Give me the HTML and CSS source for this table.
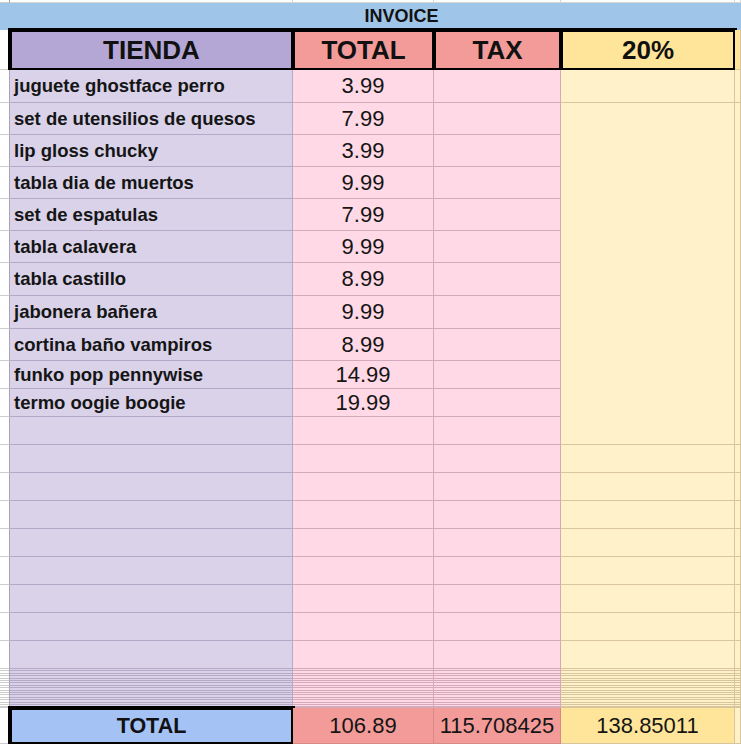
FILE: index.html
```html
<!DOCTYPE html>
<html lang="es">
<head>
<meta charset="utf-8">
<title>Invoice</title>
<link rel="stylesheet" href="styles.css">
</head>
<body>
<div class="sheet">
  <!-- top partial row -->
  <div class="cell gut"></div><div class="cell wh"></div><div class="cell wh"></div><div class="cell wh"></div><div class="cell wh"></div><div class="cell wh"></div>

  <!-- banner -->
  <div class="cell banner">INVOICE</div>

  <!-- header -->
  <div class="cell gut"></div>
  <div class="cell hd hp">TIENDA</div>
  <div class="cell hd hr">TOTAL</div>
  <div class="cell hd hr">TAX</div>
  <div class="cell hd hy">20%</div>
  <div class="cell hy-soft"></div>

  <!-- row 1 -->
  <div class="cell gut"></div><div class="cell pu it">juguete ghostface perro</div><div class="cell pk num">3.99</div><div class="cell pk"></div><div class="cell ye"></div><div class="cell ye"></div>

  <!-- row 2 with merged yellow block -->
  <div class="cell gut"></div><div class="cell pu it">set de utensilios de quesos</div><div class="cell pk num">7.99</div><div class="cell pk"></div><div class="cell ye merge"></div><div class="cell ye merge"></div>

  <div class="cell gut"></div><div class="cell pu it">lip gloss chucky</div><div class="cell pk num">3.99</div><div class="cell pk"></div>
  <div class="cell gut"></div><div class="cell pu it">tabla dia de muertos</div><div class="cell pk num">9.99</div><div class="cell pk"></div>
  <div class="cell gut"></div><div class="cell pu it">set de espatulas</div><div class="cell pk num">7.99</div><div class="cell pk"></div>
  <div class="cell gut"></div><div class="cell pu it">tabla calavera</div><div class="cell pk num">9.99</div><div class="cell pk"></div>
  <div class="cell gut"></div><div class="cell pu it">tabla castillo</div><div class="cell pk num">8.99</div><div class="cell pk"></div>
  <div class="cell gut"></div><div class="cell pu it">jabonera bañera</div><div class="cell pk num">9.99</div><div class="cell pk"></div>
  <div class="cell gut"></div><div class="cell pu it">cortina baño vampiros</div><div class="cell pk num">8.99</div><div class="cell pk"></div>
  <div class="cell gut"></div><div class="cell pu it">funko pop pennywise</div><div class="cell pk num">14.99</div><div class="cell pk"></div>
  <div class="cell gut"></div><div class="cell pu it">termo oogie boogie</div><div class="cell pk num">19.99</div><div class="cell pk"></div>
  <div class="cell gut"></div><div class="cell pu"></div><div class="cell pk"></div><div class="cell pk"></div>

  <!-- empty rows -->
  <div class="cell gut"></div><div class="cell pu"></div><div class="cell pk"></div><div class="cell pk"></div><div class="cell ye"></div><div class="cell ye"></div>
  <div class="cell gut"></div><div class="cell pu"></div><div class="cell pk"></div><div class="cell pk"></div><div class="cell ye"></div><div class="cell ye"></div>
  <div class="cell gut"></div><div class="cell pu"></div><div class="cell pk"></div><div class="cell pk"></div><div class="cell ye"></div><div class="cell ye"></div>
  <div class="cell gut"></div><div class="cell pu"></div><div class="cell pk"></div><div class="cell pk"></div><div class="cell ye"></div><div class="cell ye"></div>
  <div class="cell gut"></div><div class="cell pu"></div><div class="cell pk"></div><div class="cell pk"></div><div class="cell ye"></div><div class="cell ye"></div>
  <div class="cell gut"></div><div class="cell pu"></div><div class="cell pk"></div><div class="cell pk"></div><div class="cell ye"></div><div class="cell ye"></div>
  <div class="cell gut"></div><div class="cell pu"></div><div class="cell pk"></div><div class="cell pk"></div><div class="cell ye"></div><div class="cell ye"></div>
  <div class="cell gut"></div><div class="cell pu"></div><div class="cell pk"></div><div class="cell pk"></div><div class="cell ye"></div><div class="cell ye"></div>

  <!-- collapsed thin rows -->
  <div class="cell gut thin"></div><div class="cell pu thin"></div><div class="cell pk thin"></div><div class="cell pk thin"></div><div class="cell ye thin"></div><div class="cell ye thin"></div>

  <!-- totals -->
  <div class="cell gut"></div>
  <div class="cell tot">TOTAL</div>
  <div class="cell tr num">106.89</div>
  <div class="cell tr num">115.708425</div>
  <div class="cell ty num">138.85011</div>
  <div class="cell ye"></div>
</div>
</body>
</html>
```

FILE: styles.css
```css
html, body {
  margin: 0;
  padding: 0;
  background: #fff;
  overflow: hidden;
}

body {
  width: 741px;
  height: 744px;
  font-family: "Liberation Sans", Arial, sans-serif;
  color: #151515;
}

.sheet {
  display: grid;
  grid-template-columns: 10px 283px 141px 127px 174px 6px;
  grid-template-rows: 3px 27px 40px 33px repeat(5, 32px) 33px 33px 32px 28px 28px repeat(9, 28px) 39px 36px;
  width: 741px;
  overflow: hidden;
}

.cell {
  box-sizing: border-box;
  border-right: 1px solid var(--ln);
  border-bottom: 1px solid var(--ln);
  background-color: var(--bg);
  display: flex;
  align-items: center;
  min-width: 0;
  white-space: nowrap;
}

.wh { --bg: #fff; --ln: #d6d6d6; }
.gut { --bg: #fff; --ln: #cdcdcd; border-right-color: #aaa1ba; }
.pu { --bg: #d9d2e9; --ln: #b4aac7; }
.pk { --bg: #ffd9e6; --ln: #d4aabb; }
.ye { --bg: #fff1ca; --ln: #d9c59d; }

.banner {
  grid-column: 1 / -1;
  --bg: #9fc5e8;
  --ln: #9fc5e8;
  justify-content: center;
  padding-left: 63px;
  font-weight: 700;
  font-size: 18px;
  color: #111;
}

.hd {
  border: 2px solid #000;
  outline: 2px solid #000;
  justify-content: center;
  font-weight: 700;
  font-size: 26px;
  color: #111;
}

.hp { --bg: #b4a7d6; }
.hr { --bg: #f29b99; }
.hy { --bg: #ffe599; }
.hy-soft { --bg: #ffe599; --ln: #d9c59d; }

.merge { grid-row: span 11; }

.it {
  font-weight: 700;
  font-size: 18.5px;
  padding-left: 4px;
}

.num {
  justify-content: center;
  font-size: 22px;
}

.thin {
  background-image: repeating-linear-gradient(to bottom, transparent 0, transparent 1.4px, var(--ln) 1.4px, var(--ln) 2.4px);
}

.tot {
  --bg: #a4c2f4;
  border: 2px solid #000;
  outline: 2px solid #000;
  justify-content: center;
  font-weight: 700;
  font-size: 21.5px;
  color: #111;
}

.tr { --bg: #f29b99; --ln: #d88a88; }
.ty { --bg: #ffe599; --ln: #d9c59d; }
```
